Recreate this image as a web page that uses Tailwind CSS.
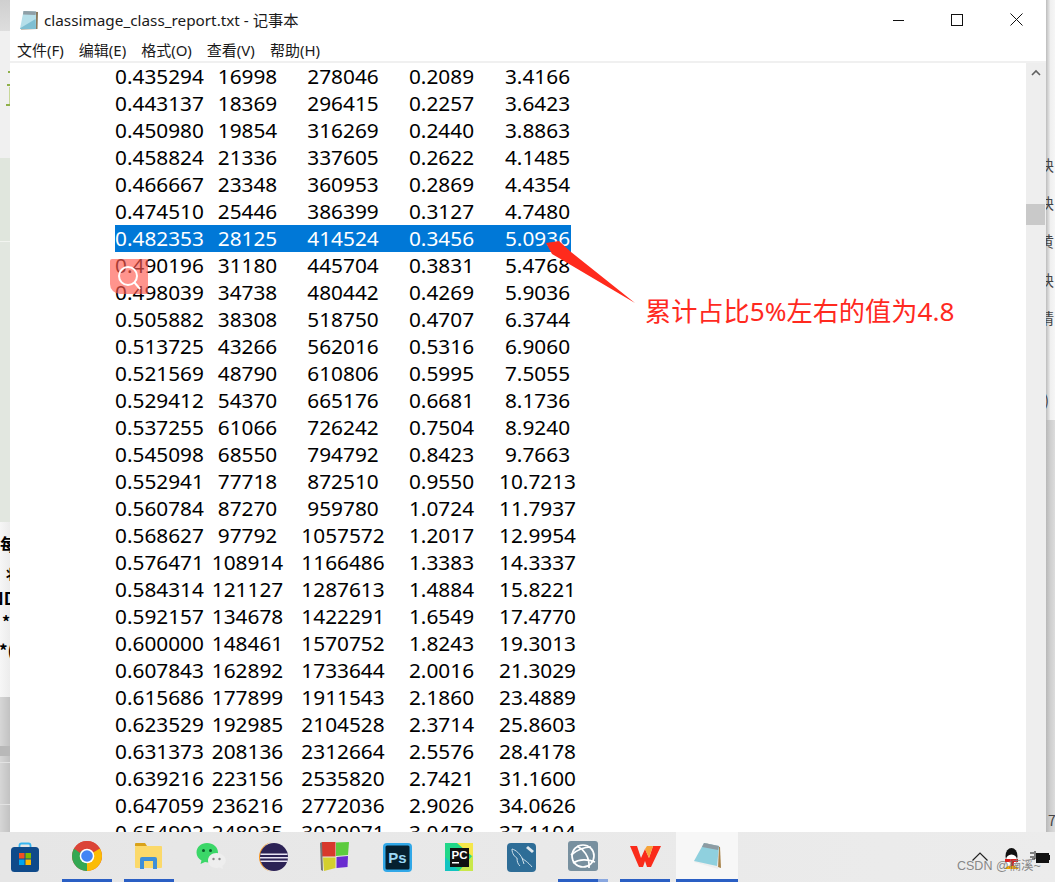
<!DOCTYPE html>
<html lang="zh"><head><meta charset="utf-8"><title>classimage_class_report.txt - 记事本</title>
<script src="https://cdn.jsdelivr.net/npm/@tailwindcss/browser@4"></script></head>
<body class="m-0 overflow-hidden">
<div class="relative flex h-[882px] w-[1055px] flex-col overflow-hidden bg-white font-['Noto_Sans','Noto_Sans_CJK_SC',sans-serif] text-black">

<div class="flex h-[832px] min-h-0">
  <!-- desktop behind, left -->
  <div class="relative flex w-[10px] shrink-0 flex-col overflow-hidden font-['Noto_Sans_CJK_SC',serif] font-bold">
    <div class="h-[31px] bg-gradient-to-b from-[#cfcfcf] to-[#dedede]"></div>
    <div class="relative h-[127px] bg-[#f0f0f0]">
      <div class="absolute left-[8px] top-[40px] h-[2px] w-[2px] bg-[#8fb04a]"></div>
      <div class="absolute left-[7px] top-[53px] h-[2px] w-[3px] bg-[#8fb04a]"></div>
      <div class="absolute left-[9px] top-[56px] h-[18px] w-[1px] bg-[#c8d89a]"></div>
      <div class="absolute left-[6px] top-[73px] h-[2px] w-[4px] bg-[#8fb04a]"></div>
    </div>
    <div class="h-[84px] border-b border-[#f2f4f0] bg-[#e0e6dd]"></div>
    <div class="h-[280px] bg-[#e2e7e0]"></div>
    <div class="relative h-[175px] bg-gradient-to-r from-[#f6f6f6] to-[#ececec]">
      <span class="absolute left-0 top-[7px] text-[17px] leading-[30px]">每</span>
      <span class="absolute left-[3px] top-[39px] text-[14px] leading-[24px]">丬</span>
      <span class="absolute -left-[9px] top-[63px] text-[17px] leading-[26px]">ND</span>
      <span class="absolute left-[2px] top-[86px] text-[16px] leading-[26px]">*</span>
      <span class="absolute -left-[1px] top-[115px] whitespace-nowrap text-[17px] leading-[26px]">*(</span>
    </div>
    <div class="flex-1 bg-gradient-to-r from-[#d6d6d6] to-[#c2c2c2]">
      <div class="mt-[49px] h-[10px] bg-[#b8b8b8]"></div>
      <div class="mt-[6px] h-px bg-[#e2e2e2]"></div>
      <div class="mt-[41px] h-px bg-[#e2e2e2]"></div>
    </div>
  </div>

  <!-- notepad window -->
  <div class="mt-px flex w-[1036px] shrink-0 flex-col bg-white">
    <div class="flex h-[37px] shrink-0 items-center">
      <svg class="ml-[9px] mr-[5px] h-[22px] w-[20px] shrink-0" viewBox="0 0 20 22">
        <path d="M5 2 19 3 18.500 20 2 20.500Z" fill="#8a7a5c"/>
        <path d="M4.500 2 17 2.500 17 20 1 20Z" fill="#b5dfe9"/>
        <path d="M4.500 2 17 2.500 16.500 6 4 5.500Z" fill="#8f9fa6"/>
        <path d="M1.500 19 16.500 10 17 20 1 20Z" fill="#7fbfd2"/>
      </svg>
      <span class="whitespace-nowrap text-[15.300px] leading-[20px] text-[#1a1a1a]">classimage_class_report.txt - 记事本</span>
      <div class="ml-auto flex h-full items-center">
        <svg class="h-[12px] w-[12px]" viewBox="0 0 12 12"><path d="M1 6.500H12" stroke="#111" stroke-width="1"/></svg>
        <svg class="ml-[47px] h-[12px] w-[12px]" viewBox="0 0 12 12"><rect x=".5" y=".5" width="11" height="11" fill="none" stroke="#111"/></svg>
        <svg class="ml-[47px] mr-[23px] h-[13px] w-[13px]" viewBox="0 0 13 13"><path d="M.5.5 12.500 12.500M12.500.5.5 12.500" stroke="#111"/></svg>
      </div>
    </div>
    <div class="flex h-[23px] shrink-0 items-center gap-[15px] pl-[7px] text-[15px] leading-[20px] text-[#1a1a1a]">
      <span>文件(F)</span><span>编辑(E)</span><span>格式(O)</span><span>查看(V)</span><span>帮助(H)</span>
    </div>
    <div class="h-[2px] shrink-0 bg-[#f0f0f0]"></div>
    <div class="flex min-h-0 flex-1">
      <div class="min-w-0 flex-1 overflow-hidden pl-[105px] text-center text-[20.800px] leading-[27px]">
<div class="grid h-[27px] w-[456px] grid-cols-[89px_87px_104px_93px_99px]"><span>0.435294</span><span>16998</span><span>278046</span><span>0.2089</span><span>3.4166</span></div>
<div class="grid h-[27px] w-[456px] grid-cols-[89px_87px_104px_93px_99px]"><span>0.443137</span><span>18369</span><span>296415</span><span>0.2257</span><span>3.6423</span></div>
<div class="grid h-[27px] w-[456px] grid-cols-[89px_87px_104px_93px_99px]"><span>0.450980</span><span>19854</span><span>316269</span><span>0.2440</span><span>3.8863</span></div>
<div class="grid h-[27px] w-[456px] grid-cols-[89px_87px_104px_93px_99px]"><span>0.458824</span><span>21336</span><span>337605</span><span>0.2622</span><span>4.1485</span></div>
<div class="grid h-[27px] w-[456px] grid-cols-[89px_87px_104px_93px_99px]"><span>0.466667</span><span>23348</span><span>360953</span><span>0.2869</span><span>4.4354</span></div>
<div class="grid h-[27px] w-[456px] grid-cols-[89px_87px_104px_93px_99px]"><span>0.474510</span><span>25446</span><span>386399</span><span>0.3127</span><span>4.7480</span></div>
<div class="grid h-[27px] w-[456px] grid-cols-[89px_87px_104px_93px_99px] bg-[#0078d7] text-white"><span>0.482353</span><span>28125</span><span>414524</span><span>0.3456</span><span>5.0936</span></div>
<div class="grid h-[27px] w-[456px] grid-cols-[89px_87px_104px_93px_99px]"><span>0.490196</span><span>31180</span><span>445704</span><span>0.3831</span><span>5.4768</span></div>
<div class="grid h-[27px] w-[456px] grid-cols-[89px_87px_104px_93px_99px]"><span>0.498039</span><span>34738</span><span>480442</span><span>0.4269</span><span>5.9036</span></div>
<div class="grid h-[27px] w-[456px] grid-cols-[89px_87px_104px_93px_99px]"><span>0.505882</span><span>38308</span><span>518750</span><span>0.4707</span><span>6.3744</span></div>
<div class="grid h-[27px] w-[456px] grid-cols-[89px_87px_104px_93px_99px]"><span>0.513725</span><span>43266</span><span>562016</span><span>0.5316</span><span>6.9060</span></div>
<div class="grid h-[27px] w-[456px] grid-cols-[89px_87px_104px_93px_99px]"><span>0.521569</span><span>48790</span><span>610806</span><span>0.5995</span><span>7.5055</span></div>
<div class="grid h-[27px] w-[456px] grid-cols-[89px_87px_104px_93px_99px]"><span>0.529412</span><span>54370</span><span>665176</span><span>0.6681</span><span>8.1736</span></div>
<div class="grid h-[27px] w-[456px] grid-cols-[89px_87px_104px_93px_99px]"><span>0.537255</span><span>61066</span><span>726242</span><span>0.7504</span><span>8.9240</span></div>
<div class="grid h-[27px] w-[456px] grid-cols-[89px_87px_104px_93px_99px]"><span>0.545098</span><span>68550</span><span>794792</span><span>0.8423</span><span>9.7663</span></div>
<div class="grid h-[27px] w-[456px] grid-cols-[89px_87px_104px_93px_99px]"><span>0.552941</span><span>77718</span><span>872510</span><span>0.9550</span><span>10.7213</span></div>
<div class="grid h-[27px] w-[456px] grid-cols-[89px_87px_104px_93px_99px]"><span>0.560784</span><span>87270</span><span>959780</span><span>1.0724</span><span>11.7937</span></div>
<div class="grid h-[27px] w-[456px] grid-cols-[89px_87px_104px_93px_99px]"><span>0.568627</span><span>97792</span><span>1057572</span><span>1.2017</span><span>12.9954</span></div>
<div class="grid h-[27px] w-[456px] grid-cols-[89px_87px_104px_93px_99px]"><span>0.576471</span><span>108914</span><span>1166486</span><span>1.3383</span><span>14.3337</span></div>
<div class="grid h-[27px] w-[456px] grid-cols-[89px_87px_104px_93px_99px]"><span>0.584314</span><span>121127</span><span>1287613</span><span>1.4884</span><span>15.8221</span></div>
<div class="grid h-[27px] w-[456px] grid-cols-[89px_87px_104px_93px_99px]"><span>0.592157</span><span>134678</span><span>1422291</span><span>1.6549</span><span>17.4770</span></div>
<div class="grid h-[27px] w-[456px] grid-cols-[89px_87px_104px_93px_99px]"><span>0.600000</span><span>148461</span><span>1570752</span><span>1.8243</span><span>19.3013</span></div>
<div class="grid h-[27px] w-[456px] grid-cols-[89px_87px_104px_93px_99px]"><span>0.607843</span><span>162892</span><span>1733644</span><span>2.0016</span><span>21.3029</span></div>
<div class="grid h-[27px] w-[456px] grid-cols-[89px_87px_104px_93px_99px]"><span>0.615686</span><span>177899</span><span>1911543</span><span>2.1860</span><span>23.4889</span></div>
<div class="grid h-[27px] w-[456px] grid-cols-[89px_87px_104px_93px_99px]"><span>0.623529</span><span>192985</span><span>2104528</span><span>2.3714</span><span>25.8603</span></div>
<div class="grid h-[27px] w-[456px] grid-cols-[89px_87px_104px_93px_99px]"><span>0.631373</span><span>208136</span><span>2312664</span><span>2.5576</span><span>28.4178</span></div>
<div class="grid h-[27px] w-[456px] grid-cols-[89px_87px_104px_93px_99px]"><span>0.639216</span><span>223156</span><span>2535820</span><span>2.7421</span><span>31.1600</span></div>
<div class="grid h-[27px] w-[456px] grid-cols-[89px_87px_104px_93px_99px]"><span>0.647059</span><span>236216</span><span>2772036</span><span>2.9026</span><span>34.0626</span></div>
<div class="grid h-[27px] w-[456px] grid-cols-[89px_87px_104px_93px_99px]"><span>0.654902</span><span>248035</span><span>3020071</span><span>3.0478</span><span>37.1104</span></div>
      </div>
      <!-- scrollbar -->
      <div class="flex w-[20px] shrink-0 flex-col bg-[#eeeeee]">
        <svg class="mx-auto mt-[6px] h-[7px] w-[10px]" viewBox="0 0 10 7"><path d="M1 6 5 2 9 6" fill="none" stroke="#606060" stroke-width="1.600"/></svg>
        <div class="mt-[128px] h-[21px] w-[19px] bg-[#c9c9c9]"></div>
      </div>
    </div>
  </div>

  <!-- desktop behind, right -->
  <div class="relative flex w-[9px] shrink-0 flex-col overflow-hidden font-['Noto_Sans_CJK_SC',serif] text-[15px] leading-[20px] text-[#444]">
    <div class="h-[420px] bg-gradient-to-r from-[#bdbdbd] via-[#f0f0f0] to-[#f6f6f6]"></div>
    <div class="flex-1 bg-gradient-to-r from-[#b8b8b8] via-[#cfcfcf] to-[#dcdcdc]"></div>
    <span class="absolute -left-[7px] top-[155px]">块</span>
    <span class="absolute -left-[7px] top-[193px]">块</span>
    <span class="absolute -left-[7px] top-[231px]">黄</span>
    <span class="absolute -left-[7px] top-[270px]">块</span>
    <span class="absolute -left-[7px] top-[308px]">请</span>
    <span class="absolute -left-[2px] top-[390px]">)</span>
    <span class="absolute left-[2px] top-[810px] text-[14px]">7</span>
  </div>
</div>

<!-- taskbar -->
<div class="flex h-[50px] shrink-0 items-stretch gap-[12px] bg-gradient-to-r from-[#e6e6e6] to-[#ececec]">
  <div class="flex w-[50px] items-center justify-center">
    <svg class="h-[30px] w-[30px]" viewBox="0 0 30 30"><path d="M9.500 8V3.500Q9.500 1.500 11.500 1.500H18.500Q20.500 1.500 20.500 3.500V8" fill="none" stroke="#36b5f0" stroke-width="1.800"/><rect x="1" y="5" width="28" height="25" rx="3.500" fill="#0f4a8a"/><rect x="9" y="11" width="5.500" height="5.500" fill="#f25022"/><rect x="15.500" y="11" width="5.500" height="5.500" fill="#7fba00"/><rect x="9" y="17.500" width="5.500" height="5.500" fill="#00a4ef"/><rect x="15.500" y="17.500" width="5.500" height="5.500" fill="#ffb900"/></svg>
  </div>
  <div class="flex w-[50px] items-center justify-center border-b-[3px] border-[#2a5fc4]">
    <svg class="h-[30px] w-[30px]" viewBox="0 0 30 30"><circle cx="15" cy="15" r="15" fill="#db4437"/><path d="M15 15 27.990 7.500A15 15 0 0 1 15 30Z" fill="#fbbc05"/><path d="M15 15 15 30A15 15 0 0 1 2.010 7.500L9 9Z" fill="#34a853"/><path d="M2.010 7.500A15 15 0 0 1 27.990 7.500H15Q9.500 7.500 8 12Z" fill="#db4437"/><circle cx="15" cy="15" r="7.300" fill="#fff"/><circle cx="15" cy="15" r="5.800" fill="#4285f4"/></svg>
  </div>
  <div class="flex w-[50px] items-center justify-center border-b-[3px] border-[#2a5fc4]">
    <svg class="h-[28px] w-[28px]" viewBox="0 0 28 28"><path d="M0 2Q0 1 1 1H10L12 4H0Z" fill="#d9a21a"/><rect y="4" width="27" height="22" rx="1" fill="#fbd96a"/><path d="M5 27V17Q5 15 7 15H20Q22 15 22 17V27H18V19H9V27Z" fill="#3f8fd8"/></svg>
  </div>
  <div class="flex w-[50px] items-center justify-center">
    <svg class="h-[30px] w-[30px]" viewBox="0 0 30 30"><path d="M11 1C5 1 .5 5 .5 10.500 .5 14 2.500 17 5.500 18.500L4.500 22 9 20C10 20.300 11 20.400 12 20.400 18 20.400 22 16 22 10.500 22 5 17 1 11 1Z" fill="#3bd768"/><circle cx="7.500" cy="8.500" r="1.500" fill="#0b5d2a"/><circle cx="14.500" cy="8.500" r="1.500" fill="#0b5d2a"/><path d="M20.500 11C15.500 11 12 14.500 12 18.500 12 22.500 15.500 26 20.500 26 21.500 26 22.500 25.800 23.500 25.500L27 27 26.300 24C28.500 22.500 29.800 20.500 29.800 18.500 29.800 14.500 25.500 11 20.500 11Z" fill="#eeeeee"/><circle cx="17.500" cy="17" r="1.200" fill="#888"/><circle cx="23.500" cy="17" r="1.200" fill="#888"/></svg>
  </div>
  <div class="flex w-[50px] items-center justify-center">
    <svg class="h-[30px] w-[30px]" viewBox="0 0 30 30"><path d="M16 0A15 15 0 1 0 16 30 13.500 15 0 0 1 16 0Z" fill="#f7941e"/><circle cx="16" cy="15" r="14" fill="#2c2255"/><path d="M2.500 11.500H29.500V13H2.500ZM2 15H30V16.500H2ZM2.500 18.500H29.500V20H2.500Z" fill="#e8e4f4"/></svg>
  </div>
  <div class="flex w-[50px] items-center justify-center">
    <svg class="h-[30px] w-[30px]" viewBox="0 0 30 30"><path d="M2 0H15.500V14.500H2Z" fill="#d8382c"/><path d="M16 .5 29 0 28 13 16 14Z" fill="#5ccb3e"/><path d="M3 15.500H15.500V26L4 29Z" fill="#d4cf2e"/><path d="M16.500 15 28 14 27.500 25 16.500 26Z" fill="#6a2cd0"/><path d="M0 1 2 0 3 29 1 28Z" fill="#777"/></svg>
  </div>
  <div class="flex w-[50px] items-center justify-center">
    <svg class="h-[29px] w-[29px]" viewBox="0 0 29 29"><rect width="29" height="29" rx="4" fill="#31a8e8"/><rect x="2.500" y="2.500" width="24" height="24" rx="1.500" fill="#05202f"/><text x="14.500" y="20" text-anchor="middle" font-size="15" font-weight="700" fill="#9ad8f5" font-family="Liberation Sans">Ps</text></svg>
  </div>
  <div class="flex w-[50px] items-center justify-center">
    <svg class="h-[28px] w-[28px]" viewBox="0 0 28 28"><rect width="28" height="28" fill="#21d789"/><path d="M28 0H12L28 14Z" fill="#f5e74a"/><path d="M0 28V14L14 28Z" fill="#12c4c0"/><path d="M28 28H14L28 12Z" fill="#c9e84a"/><rect x="5" y="5" width="19" height="19" fill="#111"/><text x="14.500" y="15.500" text-anchor="middle" font-size="11.500" font-weight="700" fill="#fff" font-family="Liberation Sans">PC</text><rect x="7" y="19" width="7" height="1.500" fill="#fff"/></svg>
  </div>
  <div class="flex w-[50px] items-center justify-center">
    <svg class="h-[29px] w-[29px]" viewBox="0 0 29 29"><rect width="29" height="29" rx="4" fill="#2e6d97"/><path d="M5 6C9 7 13 11 15 15 17 17 21 19 25 24M5 6C5 11 8 14 10 15 10 19 11 21 13 23M15 15 17 21" fill="none" stroke="#cfe0ea" stroke-width="1"/><path d="M21 3 27 8 25 10 19 5Z" fill="#dfe8ee"/></svg>
  </div>
  <div class="relative flex w-[50px] items-center justify-center border-b-[3px] border-[#2a5fc4]">
    <div class="absolute -bottom-[3px] right-0 h-[3px] w-[10px] bg-[#8aa8e0]"></div>
    <svg class="h-[30px] w-[30px]" viewBox="0 0 30 30"><rect width="30" height="30" rx="3" fill="#78909f"/><g fill="none" stroke="#fff" stroke-width="1.700"><circle cx="15" cy="15" r="11"/><path d="M5 22C11 18 20 18 27 21M9 5C15 8 22 15 21 27M3 14C9 9 16 6 23 6"/></g></svg>
  </div>
  <div class="flex w-[50px] items-center justify-center border-b-[3px] border-[#2a5fc4]">
    <svg class="h-[24px] w-[31px]" viewBox="0 0 31 24"><path d="M0 2H7L11 14 15 5 19 14 23 2H31L21 23H17L15 17 13 23H9Z" fill="#fa2c1b"/><path d="M15 5 17 2H23L19 14Z" fill="#f7a43a"/></svg>
  </div>
  <div class="-ml-[6px] flex w-[62px] items-center justify-center border-b-[3px] border-[#2a5fc4] bg-[#f7f7f7] pl-[2px]">
    <svg class="h-[28px] w-[30px]" viewBox="0 0 30 28"><path d="M12 1 27 5 28 26 22 24Z" fill="#a8834a"/><path d="M11 1 26 4 25 27 1 20Z" fill="#eee"/><path d="M11 1 26 4 24 24 1 19Z" fill="#8fd0de"/><path d="M11 1 26 4 25 8 9 5Z" fill="#8d9ba2"/></svg>
  </div>
  <div class="relative flex-1">
    <svg class="absolute left-[222px] top-[20px] h-[9px] w-[16px]" viewBox="0 0 16 9"><path d="M.5 8.500 8 1 15.500 8.500" fill="none" stroke="#222" stroke-width="1.200"/></svg>
    <svg class="absolute left-[252px] top-[16px] h-[22px] w-[19px]" viewBox="0 0 19 22"><ellipse cx="9.500" cy="8" rx="6" ry="8" fill="#111"/><ellipse cx="9.500" cy="12" rx="5.500" ry="5.500" fill="#fff"/><path d="M3 11H16V14H12V18H9V14H3Z" fill="#e01f1f"/><path d="M2 21 6 18H13L17 21Z" fill="#f5a400"/></svg>
    <svg class="absolute left-[280px] top-[18px] h-[14px] w-[20px]" viewBox="0 0 20 14"><path d="M0 3H4M0 7H4M5 1V9H2" stroke="#111" fill="none"/><rect x="6" y="3" width="13" height="10" fill="#111"/><rect x="19" y="5" width="1" height="5" fill="#111"/></svg>
  </div>
</div>

<!-- annotations lying over the window -->
<div class="absolute left-[110px] top-[259px] flex h-[35px] w-[38px] items-center justify-center rounded-t-[2px] rounded-bl-[10px] rounded-br-[2px] bg-[#ff5a50]/65">
  <svg class="h-[26px] w-[26px]" viewBox="0 0 26 26"><circle cx="12" cy="12" r="9" fill="none" stroke="#fff" stroke-width="2"/><path d="M18.500 18.500 24 25" stroke="#fff" stroke-width="2"/></svg>
</div>
<svg class="pointer-events-none absolute left-[540px] top-[235px] h-[75px] w-[100px]" viewBox="0 0 100 75"><path d="M6 8 19 6 31 17 95 68 24 26 12 19Z" fill="#ff2a1c"/></svg>
<div class="absolute left-[645px] top-[293px] whitespace-nowrap text-[26.200px] leading-[36px] text-[#ff2a1f]">累计占比5%左右的值为4.8</div>
<div class="absolute left-[957px] top-[858px] whitespace-nowrap font-['Liberation_Sans','Noto_Sans_CJK_SC',sans-serif] text-[12.500px] leading-[16px] text-[#7a7a7a]/90">CSDN @楠溪~</div>
</div>
</body></html>
